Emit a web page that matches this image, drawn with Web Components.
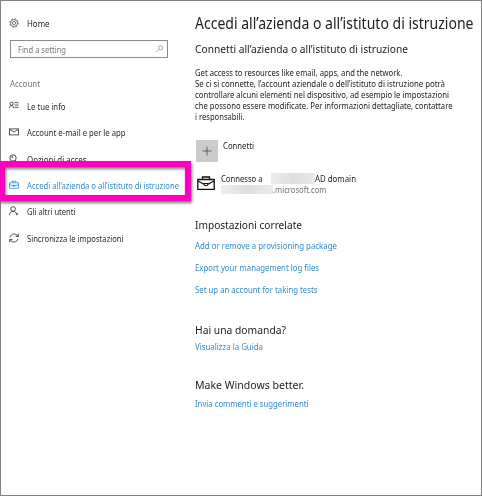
<!DOCTYPE html>
<html lang="it">
<head>
<meta charset="utf-8">
<title>Impostazioni</title>
<style>
html,body{margin:0;height:100%;overflow:hidden;background:#fff}
body{font-family:"Noto Sans","Open Sans",sans-serif;color:#222}
</style>
</head>
<body>
<settings-window></settings-window>
<script>
// A single line of text, condensed or widened to the width it is given.
class TextLine extends HTMLElement {
  connectedCallback() {
    const s = this.getAttribute('size') || '9.2';
    const h = this.getAttribute('line') || '11';
    const root = this.attachShadow({mode:'open'});
    root.innerHTML = `<style>:host{display:block;height:${h}px;line-height:${h}px;font-size:${s}px;width:${this.getAttribute('w')}px;white-space:nowrap}
      span{display:inline-block;transform-origin:0 50%;vertical-align:top}</style><span><slot></slot></span>`;
    const span = root.querySelector('span');
    const natural = span.offsetWidth ? span.getBoundingClientRect().width : 0;
    if (natural) span.style.transform = `scaleX(${Number(this.getAttribute('w')) / natural})`;
  }
}

const ICONS = {
  gear: '<g stroke-width=".8"><circle cx="5" cy="5" r="3.5"/><circle cx="5" cy="5" r="1.6"/><circle cx="5" cy="5" r="4.3" stroke-dasharray="1.7 1.677"/></g>',
  search: '<circle cx="6.2" cy="3.5" r="2.8"/><path d="M4.3 5.4L.4 9.4"/>',
  info: '<circle cx="2.6" cy="2.8" r="1.6"/><path d="M.4 7.2C.5 3.8 4.7 3.8 4.8 7.2M5.6 1.7H9.5M5.6 4H9.5M5.6 6.3H9.5"/>',
  mail: '<rect x=".5" y="1.9" width="9" height="6"/><path d="M.7 2.3L5 5L9.3 2.3"/>',
  key: '<circle cx="4" cy="4" r="3.2"/><circle cx="3.2" cy="3" r=".5"/><path d="M6.2 6.2L9 8.8M4.6 6.9L7.6 9.5"/>',
  work: '<path d="M.5 2.8H9.5V8.3H.5ZM3.2 2.8V1.2H6.8V2.8M.6 4.5C3 6 7 6 9.4 4.5M4.2 5.2H5.8V6.3H4.2Z"/>',
  user: '<circle cx="4.1" cy="3" r="2.3"/><path d="M.5 9.2C.7 6.4 2.2 5.3 4.1 5.3C5.4 5.3 6.4 6 7 7M6.7 8H9.1M7.9 6.8V9.2"/>',
  sync: '<path d="M1 4.3C1.8.5 6.8-.3 9 3.3M9.3.8V3.5H6.6M9 5.7C8.2 9.5 3.2 10.3 1 6.7M.7 9.2V6.5H3.4"/>',
  plus: '<path d="M5 .5V9.5M.5 5H9.5"/>'
};
class UiIcon extends HTMLElement {
  connectedCallback() {
    this.attachShadow({mode:'open'}).innerHTML = `<style>:host{display:block;flex:none;width:10px;height:10px}svg{display:block;width:100%;height:100%;overflow:visible;fill:none;stroke:currentColor;stroke-width:.8}</style>
      <svg viewBox="0 0 10 10">${ICONS[this.getAttribute('name')]}</svg>`;
  }
}

class WorkBadge extends HTMLElement {
  connectedCallback() {
    this.attachShadow({mode:'open'}).innerHTML = `<style>:host{display:block;width:18px;height:15px;flex:none}svg{display:block;fill:none;stroke:#111;stroke-width:1.3}</style>
      <svg width="18" height="15" viewBox="0 0 18 15"><path d="M.8 3.5H17.2V13.3H.8ZM5.5 3.5V1H12.5V3.5M1 5L7 8.2M17 5L11 8.2"/><path d="M7 7.5H11C11 10.5 7 10.5 7 7.5Z" stroke-width="1.1"/></svg>`;
  }
}

class SideItem extends HTMLElement {
  connectedCallback() {
    this.attachShadow({mode:'open'}).innerHTML = `<style>:host{display:flex;height:26.3px;align-items:center;gap:8px;color:#2b2b2b}
      :host([selected]){color:#358cd6}ui-icon{margin-top:-1px}</style>
      <ui-icon name="${this.getAttribute('icon')}"></ui-icon><text-line w="${this.getAttribute('w')}">${this.getAttribute('label')}</text-line>`;
  }
}

class SearchBox extends HTMLElement {
  connectedCallback() {
    this.attachShadow({mode:'open'}).innerHTML = `<style>:host{display:flex;box-sizing:border-box;width:158px;height:18px;border:1px solid #8a8a8a;align-items:center;justify-content:space-between;padding:0 4px 0 6.5px;color:#777}
      ui-icon{width:7.5px;height:7.5px}</style><text-line w="48">Find a setting</text-line><ui-icon name="search"></ui-icon>`;
  }
}

class SideBar extends HTMLElement {
  connectedCallback() {
    this.attachShadow({mode:'open'}).innerHTML = `<style>:host{display:block;padding:16.5px 0 0 8px}
      .home{display:flex;gap:8px;align-items:center;height:11px;color:#222}.home ui-icon{color:#555}
      search-box{margin:11.5px 0 0 1px}.head{margin:20px 0 0 1px;color:#777}nav{margin-top:4.5px}</style>
      <div class="home"><ui-icon name="gear"></ui-icon><text-line w="22.5">Home</text-line></div>
      <search-box></search-box>
      <text-line class="head" w="30">Account</text-line>
      <nav><side-item icon="info" w="38.5" label="Le tue info"></side-item>
      <side-item icon="mail" w="98.5" label="Account e-mail e per le app"></side-item>
      <side-item icon="key" w="59.5" label="Opzioni di acces"></side-item>
      <side-item icon="work" w="152" selected label="Accedi all’azienda o all’istituto di istruzione"></side-item>
      <side-item icon="user" w="48.5" label="Gli altri utenti"></side-item>
      <side-item icon="sync" w="96.5" label="Sincronizza le impostazioni"></side-item></nav>`;
  }
}

class LinkGroup extends HTMLElement {
  connectedCallback() {
    this.attachShadow({mode:'open'}).innerHTML = `<style>:host{display:block}.links{display:grid;gap:11px;margin-top:var(--gap,4px);color:#328bd8}</style>
      <slot name="title"></slot><div class="links"><slot></slot></div>`;
  }
}

class ContentPane extends HTMLElement {
  connectedCallback() {
    this.attachShadow({mode:'open'}).innerHTML = `<style>:host{display:block;padding:12px 0 0}
      .sub{margin-top:7.5px}.intro{margin-top:10.5px}
      .add{display:flex;gap:5px;margin:18px 0 0 1px;height:22px}.tile{width:22px;height:22px;background:#cbcbcb;display:grid;place-items:center;color:#444}
      .conn{display:flex;gap:6px;margin:11px 0 0 2px;height:22px}.conn work-badge{margin-top:2.5px}
      .row{display:flex;height:11px;align-items:center}.blur{background:linear-gradient(90deg,#ededed,#dedede 50%,#e9e9e9)}
      .b1{width:44px;height:11px;margin-left:8.5px}.b2{width:52px;height:9px}.grey{color:#707070}
      .g1{margin-top:21.5px;--gap:7.5px}.g2{margin-top:26.5px;--gap:3px}.g3{margin-top:25px;--gap:5.5px}</style>
      <text-line w="278.5" size="15.6" line="20">Accedi all’azienda o all’istituto di istruzione</text-line>
      <text-line class="sub" w="213" size="11.6" line="16">Connetti all’azienda o all’istituto di istruzione</text-line>
      <div class="intro">
      <text-line w="207.5">Get access to resources like email, apps, and the network.</text-line>
      <text-line w="250">Se ci si connette, l’account aziendale o dell’istituto di istruzione potrà</text-line>
      <text-line w="254">controllare alcuni elementi nel dispositivo, ad esempio le impostazioni</text-line>
      <text-line w="257.5">che possono essere modificate. Per informazioni dettagliate, contattare</text-line>
      <text-line w="49.5">i responsabili.</text-line></div>
      <div class="add"><div class="tile"><ui-icon name="plus"></ui-icon></div><text-line w="31">Connetti</text-line></div>
      <div class="conn"><work-badge></work-badge><div>
        <div class="row"><text-line w="41.5">Connesso a</text-line><div class="blur b1"></div><text-line w="41">AD domain</text-line></div>
        <div class="row grey"><div class="blur b2"></div><text-line w="53.5">.microsoft.com</text-line></div></div></div>
      <link-group class="g1"><text-line slot="title" w="107" size="11.6" line="16">Impostazioni correlate</text-line>
        <text-line w="142">Add or remove a provisioning package</text-line><text-line w="124">Export your management log files</text-line><text-line w="122.5">Set up an account for taking tests</text-line></link-group>
      <link-group class="g2"><text-line slot="title" w="91" size="11.6" line="16">Hai una domanda?</text-line><text-line w="68">Visualizza la Guida</text-line></link-group>
      <link-group class="g3"><text-line slot="title" w="109" size="11.6" line="16">Make Windows better.</text-line><text-line w="113.5">Invia commenti e suggerimenti</text-line></link-group>`;
  }
}

// Outline marking the selected sidebar entry; it overlaps the window frame.
class CalloutFrame extends HTMLElement {
  connectedCallback() {
    this.attachShadow({mode:'open'}).innerHTML = `<style>:host{position:absolute;left:-1px;top:161px;width:192px;height:40px;box-sizing:border-box;border:6px solid #ff00bf;filter:drop-shadow(1.5px 2px 1.5px rgba(0,0,0,.55));pointer-events:none}</style>`;
  }
}

class SettingsWindow extends HTMLElement {
  connectedCallback() {
    this.attachShadow({mode:'open'}).innerHTML = `<style>:host{display:grid;grid-template-columns:194px minmax(0,1fr);box-sizing:border-box;width:482px;height:496px;border:1px solid #808080;background:#fff}</style>
      <side-bar></side-bar><content-pane></content-pane><callout-frame></callout-frame>`;
  }
}
customElements.define('text-line', TextLine);
customElements.define('ui-icon', UiIcon);
customElements.define('work-badge', WorkBadge);
customElements.define('side-item', SideItem);
customElements.define('search-box', SearchBox);
customElements.define('side-bar', SideBar);
customElements.define('link-group', LinkGroup);
customElements.define('content-pane', ContentPane);
customElements.define('callout-frame', CalloutFrame);
customElements.define('settings-window', SettingsWindow);
</script>
</body>
</html>
